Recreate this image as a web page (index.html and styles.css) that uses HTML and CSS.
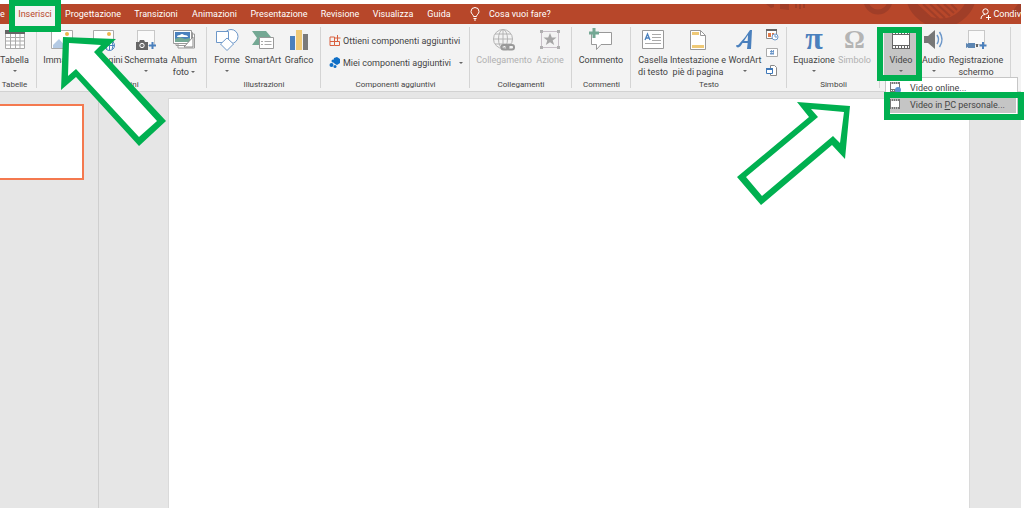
FILE: index.html
```html
<!DOCTYPE html>
<html lang="it">
<head>
<meta charset="utf-8">
<title>Inserisci</title>
<link rel="stylesheet" href="styles.css">
</head>
<body>
<div class="app">
  <header class="tabbar">
    <svg class="pattern" width="256" height="20" viewBox="765 4 256 20" aria-hidden="true">
      <g fill="none" stroke="#a03e28">
        <path d="M766 4l5 4 3-1V4zM780 4h9v6l-9-1z" fill="#a03e28" stroke="none"/>
        <path d="M796 4v4M800 4v5M804 4v4" stroke-width="2"/>
        <circle cx="878" cy="0" r="12" stroke-width="5"/>
        <circle cx="941" cy="-8" r="31" stroke-width="9"/>
        <path d="M916 4l14 13M923 4l16 15M930 4l15 14M937 4l13 12M944 4l10 9M951 4l6 6" stroke-width="2"/>
        <path d="M1012 12l6-8h3v10z" fill="#a03e28" stroke="none"/>
      </g>
    </svg>
    <nav class="tabs">
      <button class="tab tab-cut">e</button>
      <button class="tab tab-active">Inserisci</button>
      <button class="tab t-prog">Progettazione</button>
      <button class="tab t-tran">Transizioni</button>
      <button class="tab t-anim">Animazioni</button>
      <button class="tab t-pres">Presentazione</button>
      <button class="tab t-rev">Revisione</button>
      <button class="tab t-vis">Visualizza</button>
      <button class="tab t-guida">Guida</button>
      <button class="tab t-ask"><svg width="10" height="14" viewBox="0 0 10 14" fill="none" stroke="#fff"><path d="M3.500 9.500C3.500 7.500 1 7 1 4.500a4 4 0 0 1 8 0C9 7 6.500 7.500 6.500 9.500zM3.500 11.500h3M4 13h2"/></svg><span>Cosa vuoi fare?</span></button>
    </nav>
    <button class="share"><svg width="11" height="12" viewBox="0 0 11 12" fill="none" stroke="#fff"><circle cx="5.500" cy="3.500" r="2.700"/><path d="M1 11c0-3 2-4.500 4-4.500M6 9.500h5M8.500 7v5"/></svg><span>Condiv</span></button>
  </header>

  <div class="ribbon">
    <section class="group g-tab">
      <div class="tools">
        <button class="tool"><svg width="22" height="22" viewBox="0 0 22 22"><path fill="#fff" stroke="#aaa" d="M1.500 4.500h19v15h-19zM1.500 8.500h19M1.500 12h19M1.500 16h19M6.500 4v15M11.500 4v15M16 4v15"/><path fill="#666" d="M1 1h20v4H1z"/></svg><span>Tabella</span><i class="caret"></i></button>
      </div>
      <h2>Tabelle</h2>
    </section>
    <section class="group g-img">
      <div class="tools">
        <button class="tool"><svg width="22" height="22" viewBox="0 0 22 22"><path fill="#fff" stroke="#aaa" d="M.5 1.500h21v18H.5z"/><circle cx="16" cy="5" r="2" fill="#ecb64c"/><path fill="#b4cae4" d="M2 19v-3l6-6 8 9z"/></svg><span>Immagini</span></button>
        <button class="tool"><svg width="22" height="22" viewBox="0 0 22 22"><path fill="#fff" stroke="#aaa" d="M.5 1.500h20v18H.5z"/><circle cx="16" cy="5" r="2" fill="#ecb64c"/><path fill="#b4cae4" d="M2 19v-3l6-6 8 9z"/><g fill="#fff" stroke="#4a80bd"><circle cx="16.500" cy="16.500" r="5"/><path d="M11.500 16.500h10M16.500 11.500v10M14 12.500q-2 4 0 8M19 12.500q2 4 0 8"/></g></svg><span>Immagini</span></button>
        <button class="tool"><svg width="22" height="22" viewBox="0 0 22 22"><path fill="#fafafa" stroke="#999" stroke-dasharray="1 1" d="M2.500 1.500h17v15h-17z"/><path fill="#666" d="M1 13h3l1-2h4l1 2h3v8H1z"/><circle cx="7" cy="16.500" r="2.200" fill="#777" stroke="#fff"/><path d="M14 16.500h7M17.500 13v7" stroke="#4a80bd" stroke-width="2"/></svg><span>Schermata</span><i class="caret"></i></button>
        <button class="tool"><svg width="22" height="22" viewBox="0 0 22 22"><path fill="#fff" stroke="#999" d="M5 5h16.500v14H5zM3 3.500h16.500v13H3z"/><path fill="#fff" stroke="#999" d="M.5 1.500h18v13H.5z"/><path fill="#4a80bd" d="M2 3h15v10H2z"/><path fill="#fff" d="M4 8q0-2 3-2 2-2 4 0 4 0 4 2z"/><path fill="#74a894" d="M2 13v-3l5-2 5 2 5-1v4z"/><path fill="#fff" stroke="#888" d="M11 18l9-10v10z"/></svg><span>Album<br>foto <i class="caret caret-in"></i></span></button>
      </div>
      <h2>Immagini</h2>
    </section>
    <section class="group g-ill">
      <div class="tools">
        <button class="tool"><svg width="24" height="22" viewBox="0 0 24 22" fill="#fff" stroke="#6c97c9"><circle cx="16" cy="7.500" r="7"/><path d="M1.500 2.500h12v11h-12z"/><path d="M12 9l6.500 6L12 21.500 5.500 15z"/></svg><span>Forme</span><i class="caret"></i></button>
        <button class="tool"><svg width="22" height="22" viewBox="0 0 22 22"><path fill="#74a894" d="M0 2h14l5 6-5 8H0l5-7z"/><path fill="#fff" stroke="#999" d="M7.500 8.500h14v11h-14z"/><path stroke="#aaa" d="M9 12.500h2M12.500 12.500h7M9 15.500h2M12.500 15.500h7"/></svg><span>SmartArt</span></button>
        <button class="tool"><svg width="22" height="22" viewBox="0 0 22 22"><path fill="#4a80bd" d="M2 7h5v14H2z"/><path fill="#efc976" d="M8 1h6v20H8z"/><path fill="#7a7a7a" d="M15 5h5v16h-5z"/></svg><span>Grafico</span></button>
      </div>
      <h2>Illustrazioni</h2>
    </section>
    <section class="group g-add">
      <div class="rows">
        <button class="row"><svg width="12" height="12" viewBox="0 0 12 12" fill="none" stroke="#d9603f"><path d="M1 2h4.500v8.500H1zM1 6.500h9.500v4h-5M8.500 0v6M5.500 3h6"/></svg><span>Ottieni componenti aggiuntivi</span></button>
        <button class="row"><svg width="12" height="12" viewBox="0 0 12 12" fill="#0f6fc6"><path d="M5 1l3-1 3 2v4L8 8 6 7 4 5z"/><circle cx="2.500" cy="8" r="2"/><circle cx="6" cy="9.500" r="1.500"/><circle cx="4" cy="4" r="1.500"/></svg><span>Miei componenti aggiuntivi</span><i class="caret"></i></button>
      </div>
      <h2>Componenti aggiuntivi</h2>
    </section>
    <section class="group g-link">
      <div class="tools">
        <button class="tool" disabled><svg width="24" height="22" viewBox="0 0 24 22" fill="none" stroke="#b4b4b4"><circle cx="11" cy="10" r="9.500"/><ellipse cx="11" cy="10" rx="4.500" ry="9.500"/><path d="M1.500 10h19M3 5h16M3 15h16M11 0v20"/><g stroke="#999" stroke-width="2"><rect x="9.500" y="16" width="7" height="4.500" rx="2"/><rect x="15" y="16" width="7" height="4.500" rx="2"/></g></svg><span>Collegamento</span></button>
        <button class="tool" disabled><svg width="20" height="22" viewBox="0 0 20 22"><path fill="none" stroke="#c8c0c8" d="M1.500 2.500h17v16h-17z"/><path fill="#b0b0b0" d="M0 1h3v3H0zM17 1h3v3h-3zM0 17h3v3H0zM17 17h3v3h-3z"/><path fill="#a6a6a6" d="M10 4l1.800 4.500h4.700l-3.800 3 1.500 4.500-4.200-2.700L5.800 16l1.500-4.500-3.800-3h4.700z"/></svg><span>Azione</span></button>
      </div>
      <h2>Collegamenti</h2>
    </section>
    <section class="group g-com">
      <div class="tools">
        <button class="tool"><svg width="24" height="22" viewBox="0 0 24 22"><path fill="#fff" stroke="#999" d="M2.500 3.500h20v12H12l-4.500 5v-5h-5z"/><path stroke="#74a894" stroke-width="3" d="M0 4h10M5-1v10"/></svg><span>Commento</span></button>
      </div>
      <h2>Commenti</h2>
    </section>
    <section class="group g-text">
      <div class="tools">
        <button class="tool"><svg width="22" height="22" viewBox="0 0 22 22"><path fill="#fff" stroke="#999" d="M.5 1.500h21v18H.5z"/><path fill="none" stroke="#4a80bd" stroke-width="1.300" d="M3 11l2.500-6L8 11M4 9h3"/><path stroke="#aaa" d="M10 5.500h9M10 8.500h9M10 11.500h9M3 14.500h16"/></svg><span>Casella<br>di testo</span></button>
        <button class="tool"><svg width="18" height="22" viewBox="0 0 18 22"><path fill="#fff" stroke="#999" d="M1.500 1.500h10l5 5v14h-15z"/><path fill="none" stroke="#999" d="M11.500 1.500v5h5"/><path fill="#efc976" d="M3 3h7v3H3zM3 16h12v3H3z"/></svg><span>Intestazione e<br>piè di pagina</span></button>
        <button class="tool"><svg width="20" height="22" viewBox="0 0 20 22"><path fill="#4a80bd" fill-rule="evenodd" d="M15 1h2l-1 19h-4l.7-6H7.500q-2 4-4.500 4.500-2 0-2-2.500 2 1 4-2Q10 9 15 1zM13 6l-4 6h3.700z"/></svg><span>WordArt</span><i class="caret"></i></button>
        <div class="minis">
          <button aria-label="Data e ora"><svg width="14" height="13" viewBox="0 0 14 13"><path fill="#fff" stroke="#888" d="M1.500 1.500h10v9h-10z"/><path fill="#666" d="M1 1h11v2H1z"/><path fill="#e07a48" d="M3 5h3v4H3zM7 5h2v3H7z"/><circle cx="10" cy="9" r="3" fill="#fff" stroke="#6c97c9"/><path fill="none" stroke="#6c97c9" d="M10 7v2h2"/></svg></button>
          <button aria-label="Numero diapositiva"><svg width="14" height="11" viewBox="0 0 14 11"><path fill="#fff" stroke="#aaa" d="M1.500 1.500h11v8h-11z"/><path stroke="#6c97c9" d="M5 4.500h4M5 6.500h4M6.500 3L6 8M8.500 3L8 8"/></svg></button>
          <button aria-label="Oggetto"><svg width="14" height="13" viewBox="0 0 14 13"><path fill="#fff" stroke="#888" d="M5.500 1.500h4l2 2v8h-6z"/><path fill="#fff" stroke="#3f78b8" d="M1.500 4.500h6v5h-6z"/><path stroke="#3f78b8" stroke-width="2" d="M1 5h7"/></svg></button>
        </div>
      </div>
      <h2>Testo</h2>
    </section>
    <section class="group g-sym">
      <div class="tools">
        <button class="tool"><b class="sym sym-pi">π</b><span>Equazione</span><i class="caret"></i></button>
        <button class="tool" disabled><b class="sym">Ω</b><span>Simbolo</span></button>
      </div>
      <h2>Simboli</h2>
    </section>
    <section class="group g-media">
      <div class="tools">
        <button class="tool tool-open" aria-expanded="true"><svg width="20" height="22" viewBox="0 0 20 22"><path fill="#666" d="M1 1h18v19H1z"/><path fill="#fff" d="M2 6h16v10H2z"/><path stroke="#fff" stroke-width="2" stroke-dasharray="2 1" d="M2 4h16M2 18h16"/></svg><span>Video</span><i class="caret"></i></button>
        <button class="tool"><svg width="22" height="22" viewBox="0 0 22 22"><path fill="#777" d="M1 7h4l7-6v19l-7-6H1z"/><path fill="none" stroke="#6c97c9" stroke-width="1.500" d="M14 6q3 4.500 0 9M16.500 3q5 7.500 0 15"/></svg><span>Audio</span><i class="caret"></i></button>
        <button class="tool"><svg width="22" height="22" viewBox="0 0 22 22"><path fill="#fafafa" stroke="#999" stroke-dasharray="1 1" d="M3.500 1.500h16v14h-16z"/><path fill="#5d86b2" d="M1 14l2 1v-1h7v5H3v-1l-2 1z"/><path fill="#666" d="M11 15h2v3h-2z"/><path d="M14.500 16.500h7M18 13v7" stroke="#4a80bd" stroke-width="2"/></svg><span>Registrazione<br>schermo</span></button>
      </div>
      <div class="menu" role="menu">
        <button role="menuitem"><svg width="12" height="11" viewBox="0 0 12 11"><path fill="#777" d="M1 0h10v10H1z"/><path fill="#fff" d="M2 2h8v5H2z"/><path stroke="#fff" stroke-dasharray="1 1" d="M2 1h8M2 8.500h8"/><circle cx="9" cy="8" r="3" fill="#5c93d0"/></svg><span>Video online...</span></button>
        <button role="menuitem" class="chosen"><svg width="12" height="11" viewBox="0 0 12 11"><path fill="#777" d="M1 0h10v10H1z"/><path fill="#fff" d="M2 2h8v6H2z"/><path stroke="#fff" stroke-dasharray="1 1" d="M2 1h8M2 9h8"/></svg><span>Video in <u>P</u>C personale...</span></button>
      </div>
    </section>
  </div>

  <main class="workspace">
    <aside class="thumbs"><div class="thumb"></div></aside>
    <div class="stage"><div class="slide"></div></div>
  </main>
</div>

<div class="mark mark-tab"></div>
<div class="mark mark-video"></div>
<div class="mark mark-item"></div>
<svg class="arrows" width="1024" height="508" viewBox="0 0 1024 508" aria-hidden="true">
  <path fill="#00b050" d="M63 37L116 39 102 52 166 121 139 146 76 77 61 90zM797 102L850 106 845 159 832 145 761 205 737 177 809 117z"/>
  <path fill="#fff" d="M69 43L101 45 94 52 157 121 139 137 76 69 68 76zM811 109L844 112 840 143 833 136 762 196 746 177 818 117z"/>
</svg>
</body>
</html>
```
FILE: styles.css
```css
* { box-sizing: border-box; }
body {
  margin: 0;
  background: #fff;
  color: #444;
  font: 9px/12px Roboto, "Open Sans", sans-serif;
  overflow: hidden;
}
button {
  margin: 0;
  padding: 0;
  border: 0;
  background: none;
  color: inherit;
  font: inherit;
  white-space: nowrap;
}
svg { display: block; flex: none; overflow: visible; }
.app {
  display: flex;
  flex-direction: column;
  min-height: 100vh;
  padding: 4px 3px 0 0;
}
.tabbar {
  position: relative;
  display: flex;
  justify-content: space-between;
  height: 20px;
  background: #b7472a;
  color: #fff;
  overflow: hidden;
}
.pattern { position: absolute; right: 0; top: 0; overflow: hidden; }
.tabs { display: flex; }
.tab { flex: none; text-align: center; }
.tab-cut { width: 10px; padding-right: 6px; }
.tab-active { width: 50px; background: #f3f3f3; color: #b7472a; }
.t-prog { width: 66px; }
.t-tran { width: 60px; }
.t-anim { width: 57px; }
.t-pres { width: 72px; }
.t-rev { width: 50px; }
.t-vis { width: 56px; }
.t-guida { width: 36px; }
.t-ask { display: flex; align-items: center; gap: 9px; padding-left: 13px; }
.share {
  position: relative;
  display: flex;
  align-items: center;
  gap: 2px;
}

.ribbon {
  display: flex;
  height: 68px;
  background: #f3f3f3;
  border-bottom: 1px solid #d2d2d2;
}
.group {
  position: relative;
  display: flex;
  flex: none;
  flex-direction: column;
  justify-content: space-between;
}
.group::after {
  content: "";
  position: absolute;
  right: 0;
  top: 3px;
  bottom: 3px;
  width: 1px;
  background: #d4d4d4;
}
.group h2 {
  margin: 0;
  font-size: 8px;
  font-weight: 400;
  line-height: 12px;
  text-align: center;
  white-space: nowrap;
}
.tools { display: grid; padding-top: 5px; }
.tool {
  display: flex;
  flex-direction: column;
  align-items: center;
  justify-content: flex-start;
}
.tool span { margin-top: 3px; }
.tool:disabled { color: #b1b1b1; }
.caret {
  display: block;
  margin-top: 4px;
  border: 2px solid transparent;
  border-top-color: #666;
  border-bottom: 0;
}
.caret-in { display: inline-block; margin: 0 0 2px; }
.g-tab { width: 37px; padding-right: 8px; }
.g-tab .tools { grid-template-columns: 29px; }
.g-img { width: 170px; }
.g-img .tools { grid-template-columns: 42px 42px 42px 34px; padding-left: 4px; }
.g-ill { width: 114px; }
.g-ill .tools { grid-template-columns: 34px 38px 34px; padding-left: 3px; }
.g-add { width: 149px; }
.g-link { width: 102px; }
.g-link .tools { grid-template-columns: 60px 32px; padding-left: 4px; }
.g-com { width: 59px; }
.g-com .tools { grid-template-columns: 58px; }
.g-text { width: 156px; }
.g-text .tools { grid-template-columns: 36px 54px 40px 14px; padding-left: 4px; }
.g-sym { width: 93px; }
.g-sym .tools { grid-template-columns: 44px 37px; padding-left: 5px; }
.g-media { width: 131px; }
.g-media .tools { grid-template-columns: 34px 31px 54px; padding-left: 4px; }
.rows { display: grid; gap: 10px; padding: 11px 0 0 8px; }
.row { display: flex; align-items: center; gap: 2px; }
.row .caret { margin: 0 0 0 6px; }
.minis { display: flex; flex-direction: column; gap: 6px; margin-top: -1px; }
.sym { height: 22px; font: bold 26px/21px "Liberation Serif", serif; color: #4a80bd; }
.sym-pi { font-size: 32px; line-height: 18px; }
.tool:disabled .sym { color: #b4b4b4; }
.tool-open { background: #c5c5c5; height: 51px; }

.menu {
  position: absolute;
  left: 5px;
  top: 53px;
  z-index: 1;
  width: 133px;
  padding: 1px;
  background: #fff;
  border: 1px solid #c6c6c6;
}
.menu button {
  display: flex;
  align-items: center;
  gap: 9px;
  width: 100%;
  height: 17px;
  padding-left: 2px;
}
.menu .chosen { background: #c5c5c5; }

.workspace { display: flex; flex: 1; background: #e6e6e6; }
.thumbs { flex: none; width: 99px; padding-top: 12px; border-right: 1px solid #cfcfcf; }
.thumb {
  width: 84px;
  height: 76px;
  background: #fff;
  border: 2px solid #f4794f;
  border-left: 0;
}
.stage { display: flex; flex: 1; padding: 6px 51px 0 69px; }
.slide { flex: 1; background: #fff; border: 1px solid #dadada; border-bottom: 0; }

.mark { position: absolute; z-index: 2; border: 6px solid #00b050; }
.mark-tab { left: 9px; top: 0; width: 52px; height: 32px; }
.mark-video { left: 877px; top: 27px; width: 45px; height: 54px; }
.mark-item { left: 884px; top: 92px; width: 140px; height: 28px; }
.arrows { position: absolute; left: 0; top: 0; z-index: 2; pointer-events: none; }
```
